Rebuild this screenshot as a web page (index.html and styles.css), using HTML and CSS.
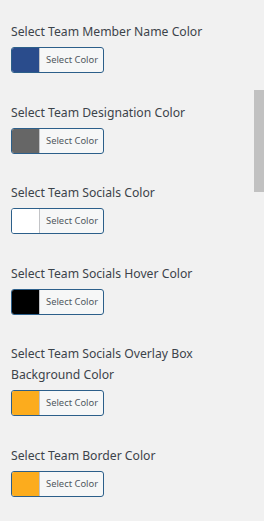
FILE: index.html
```html
<!DOCTYPE html>
<html>
<head>
<meta charset="utf-8">
<link rel="stylesheet" href="styles.css">
</head>
<body>
<div class="panel">
  <div class="field">
    <div class="label">Select Team Member Name Color</div>
    <button class="picker"><span class="swatch swatch-navy"></span><span class="picker-text">Select Color</span></button>
  </div>
  <div class="field">
    <div class="label">Select Team Designation Color</div>
    <button class="picker"><span class="swatch swatch-grey"></span><span class="picker-text">Select Color</span></button>
  </div>
  <div class="field">
    <div class="label">Select Team Socials Color</div>
    <button class="picker"><span class="swatch swatch-white"></span><span class="picker-text">Select Color</span></button>
  </div>
  <div class="field">
    <div class="label">Select Team Socials Hover Color</div>
    <button class="picker"><span class="swatch swatch-black"></span><span class="picker-text">Select Color</span></button>
  </div>
  <div class="field">
    <div class="label">Select Team Socials Overlay Box Background Color</div>
    <button class="picker"><span class="swatch swatch-orange"></span><span class="picker-text">Select Color</span></button>
  </div>
  <div class="field">
    <div class="label">Select Team Border Color</div>
    <button class="picker"><span class="swatch swatch-orange"></span><span class="picker-text">Select Color</span></button>
  </div>
</div>
<div class="scrollbar"></div>
</body>
</html>
```
FILE: styles.css
```css
html, body {
  margin: 0;
  padding: 0;
  background: #f1f1f1;
  overflow: hidden;
}
body {
  width: 264px;
  height: 521px;
  font-family: "Noto Sans", "Open Sans", sans-serif;
}
.panel {
  padding: 21px 0 0 11px;
  width: 205px;
}
.field {
  margin-bottom: 28.5px;
}
.label {
  font-size: 12.2px;
  line-height: 21px;
  color: #3c434a;
}
.picker {
  margin-top: 5px;
  display: flex;
  align-items: stretch;
  height: 26px;
  width: 93px;
  padding: 0;
  border: 1px solid #2c5f8a;
  border-radius: 3px;
  background: #f6f7f7;
  overflow: hidden;
  font-family: inherit;
  cursor: pointer;
}
.swatch {
  width: 27px;
  flex: none;
  border-right: 1px solid #c3c4c7;
}
.swatch-navy { background: #2a4c8c; }
.swatch-grey { background: #666666; }
.swatch-white { background: #ffffff; }
.swatch-black { background: #000000; }
.swatch-orange { background: #fcac1d; }
.picker-text {
  flex: 1;
  font-size: 9.4px;
  line-height: 24px;
  padding-left: 6px;
  color: #50575e;
  text-align: left;
}
.scrollbar {
  position: absolute;
  left: 254px;
  top: 90px;
  width: 10px;
  height: 102px;
  background: #c1c1c1;
}
```
